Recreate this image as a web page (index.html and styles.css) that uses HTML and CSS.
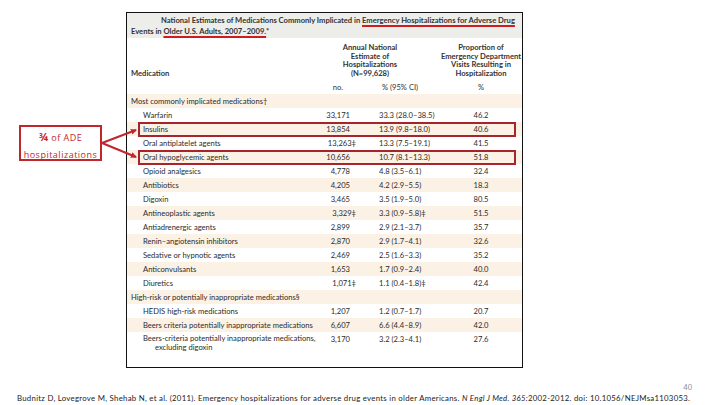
FILE: index.html
```html
<!DOCTYPE html>
<html>
<head>
<meta charset="utf-8">
<link rel="stylesheet" href="styles.css">
</head>
<body>
<div class="slide">
  <div class="table">
    <div class="title">
      <p class="t1">National Estimates of Medications Commonly Implicated in <span class="ul">Emergency Hospitalizations for Adverse Drug</span></p>
      <p class="t2">Events in <span class="ul">Older U.S. Adults, 2007–2009.</span>*</p>
    </div>
    <div class="head">
      <div class="h-med">Medication</div>
      <div class="h-annual">Annual National<br>Estimate of<br>Hospitalizations<br>(N=99,628)</div>
      <div class="h-prop">Proportion of<br>Emergency Department<br>Visits Resulting in<br>Hospitalization</div>
      <div class="h-no">no.</div>
      <div class="h-ci">% (95% CI)</div>
      <div class="h-pct">%</div>
    </div>
    <div class="body">
      <div class="row sec"><span class="name">Most commonly implicated medications†</span></div>
      <div class="row"><span class="name">Warfarin</span><span class="no">33,171</span><span class="ci">33.3 (28.0–38.5)</span><span class="pct">46.2</span></div>
      <div class="row hl"><span class="name">Insulins</span><span class="no">13,854</span><span class="ci">13.9 (9.8–18.0)</span><span class="pct">40.6</span></div>
      <div class="row"><span class="name">Oral antiplatelet agents</span><span class="no">13,263<i class="dag">‡</i></span><span class="ci">13.3 (7.5–19.1)</span><span class="pct">41.5</span></div>
      <div class="row hl"><span class="name">Oral hypoglycemic agents</span><span class="no">10,656</span><span class="ci">10.7 (8.1–13.3)</span><span class="pct">51.8</span></div>
      <div class="row"><span class="name">Opioid analgesics</span><span class="no">4,778</span><span class="ci">4.8 (3.5–6.1)</span><span class="pct">32.4</span></div>
      <div class="row"><span class="name">Antibiotics</span><span class="no">4,205</span><span class="ci">4.2 (2.9–5.5)</span><span class="pct">18.3</span></div>
      <div class="row"><span class="name">Digoxin</span><span class="no">3,465</span><span class="ci">3.5 (1.9–5.0)</span><span class="pct">80.5</span></div>
      <div class="row"><span class="name">Antineoplastic agents</span><span class="no">3,329<i class="dag">‡</i></span><span class="ci">3.3 (0.9–5.8)‡</span><span class="pct">51.5</span></div>
      <div class="row"><span class="name">Antiadrenergic agents</span><span class="no">2,899</span><span class="ci">2.9 (2.1–3.7)</span><span class="pct">35.7</span></div>
      <div class="row"><span class="name">Renin–angiotensin inhibitors</span><span class="no">2,870</span><span class="ci">2.9 (1.7–4.1)</span><span class="pct">32.6</span></div>
      <div class="row"><span class="name">Sedative or hypnotic agents</span><span class="no">2,469</span><span class="ci">2.5 (1.6–3.3)</span><span class="pct">35.2</span></div>
      <div class="row"><span class="name">Anticonvulsants</span><span class="no">1,653</span><span class="ci">1.7 (0.9–2.4)</span><span class="pct">40.0</span></div>
      <div class="row"><span class="name">Diuretics</span><span class="no">1,071<i class="dag">‡</i></span><span class="ci">1.1 (0.4–1.8)‡</span><span class="pct">42.4</span></div>
      <div class="row sec"><span class="name">High-risk or potentially inappropriate medications§</span></div>
      <div class="row"><span class="name">HEDIS high-risk medications</span><span class="no">1,207</span><span class="ci">1.2 (0.7–1.7)</span><span class="pct">20.7</span></div>
      <div class="row"><span class="name">Beers criteria potentially inappropriate medications</span><span class="no">6,607</span><span class="ci">6.6 (4.4–8.9)</span><span class="pct">42.0</span></div>
      <div class="row two"><span class="name">Beers-criteria potentially inappropriate medications,<br><span class="cont">excluding digoxin</span></span><span class="no">3,170</span><span class="ci">3.2 (2.3–4.1)</span><span class="pct">27.6</span></div>
    </div>
  </div>
  <div class="pagenum">40</div>
  <div class="cite">Budnitz D, Lovegrove M, Shehab N, et al. (2011). Emergency hospitalizations for adverse drug events in older Americans. <i>N Engl J Med. 365:</i>2002-2012. doi: 10.1056/NEJMsa1103053.</div>

  <div class="callout"><span class="frac">¾</span> of ADE<br>hospitalizations</div>
  <svg class="arrows" width="720" height="405" viewBox="0 0 720 405">
    <defs>
      <marker id="ah" markerWidth="6" markerHeight="6" refX="5" refY="3" orient="auto" markerUnits="userSpaceOnUse">
        <path d="M0,0 L6,3 L0,6 Z" fill="#c0272d"/>
      </marker>
    </defs>
    <line x1="102" y1="143" x2="136" y2="130" stroke="#c0272d" stroke-width="2" marker-end="url(#ah)"/>
    <line x1="102" y1="143" x2="136" y2="157" stroke="#c0272d" stroke-width="2" marker-end="url(#ah)"/>
  </svg>
</div>
</body>
</html>
```
FILE: styles.css
```css
* { box-sizing: border-box; }
html, body { margin: 0; padding: 0; background: #fff; }
.slide {
  position: relative;
  width: 720px;
  height: 405px;
  overflow: hidden;
  padding-top: 12px;
  font-family: Lato, "Open Sans", sans-serif;
  color: #2b2b2b;
}
.table {
  margin-left: 126px;
  width: 397px;
  height: 356px;
  border: 1px solid #111;
  font-size: 7.6px;
}
.title {
  background: #ededea;
  height: 25px;
  padding: 2px 4px 0;
  font-weight: 700;
  line-height: 11px;
  color: #333;
}
.title p { margin: 0; white-space: nowrap; }
.title .t1 { padding-left: 30px; }
.title .ul {
  text-decoration: underline;
  text-decoration-color: #d01c20;
  text-decoration-thickness: 2px;
  text-underline-offset: 2px;
}
.head {
  display: grid;
  grid-template-columns: 173px 50px 90px 1fr;
  padding: 5px 0 2px;
  line-height: 8.7px;
  font-weight: 700;
  color: #333;
}
.h-med { grid-column: 1; align-self: end; padding-left: 4px; }
.h-annual { grid-column: 2 / 4; text-align: center; }
.h-prop { grid-column: 4; text-align: center; }
.h-no { grid-column: 2; text-align: right; padding-right: 7px; margin-top: 5px; font-weight: 400; }
.h-ci { grid-column: 3; padding-left: 32px; margin-top: 5px; font-weight: 400; }
.h-pct { grid-column: 4; text-align: center; margin-top: 5px; font-weight: 400; }
.row {
  position: relative;
  display: grid;
  grid-template-columns: 173px 50px 90px 1fr;
  height: 14px;
  line-height: 14px;
  white-space: nowrap;
}
.row:nth-child(odd) { background: #fcf1e5; }
.row .name { padding-left: 16px; }
.row.sec .name { padding-left: 4px; }
.row .no { text-align: right; }
.row .dag { font-style: normal; margin-right: -6px; }
.row .ci { padding-left: 29px; }
.row .pct { text-align: center; }
.row.two { height: 22px; }
.row.two .name { line-height: 9px; padding-top: 2px; }
.row.two .cont { padding-left: 12px; }
.row.two .no, .row.two .ci, .row.two .pct { line-height: 14px; }
.row.hl::after {
  content: "";
  position: absolute;
  left: 11px;
  right: 6px;
  top: 0;
  bottom: -1px;
  border: 2px solid #a8242c;
}
.pagenum {
  margin-top: 16px;
  text-align: right;
  padding-right: 28px;
  font-size: 7.5px;
  line-height: 8px;
  color: #8c8c8c;
}
.cite {
  margin-top: 2px;
  padding-left: 17px;
  font-size: 7.8px;
  letter-spacing: 0.28px;
  line-height: 8px;
  white-space: nowrap;
  color: #222;
}
.callout {
  position: absolute;
  left: 19px;
  top: 125px;
  width: 83px;
  height: 36px;
  border: 2px solid #c0272d;
  color: #c0272d;
  font-family: "Open Sans", sans-serif;
  font-size: 9px;
  letter-spacing: 0.5px;
  line-height: 17px;
  text-align: center;
  padding-top: 1px;
}
.callout .frac { font-weight: 700; font-size: 11px; }
.arrows { position: absolute; left: 0; top: 0; pointer-events: none; }
```
